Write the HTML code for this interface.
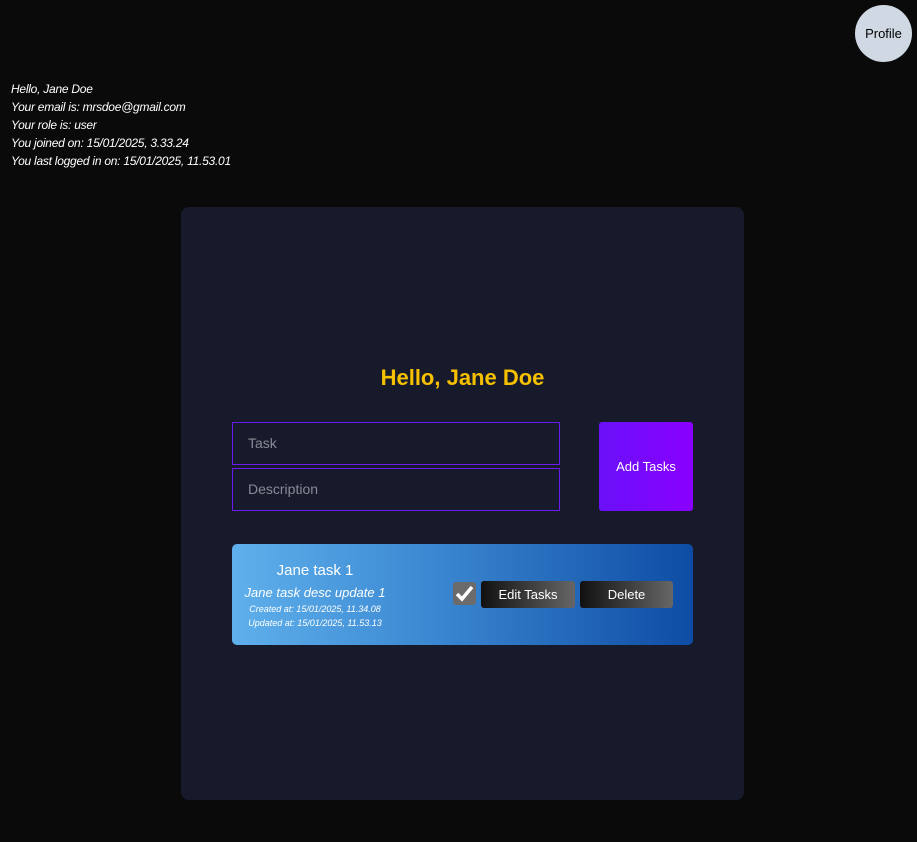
<!DOCTYPE html>
<html><head><style>
body{margin:0;width:917px;height:842px;background:#0a0a0a;font-family:"Liberation Sans",sans-serif;position:relative;overflow:hidden}
.prof{position:absolute;left:855px;top:5px;width:57px;height:57px;border-radius:50%;background:#cfd8e3;color:#000;font-size:13px;display:flex;align-items:center;justify-content:center}
.info{position:absolute;left:11px;top:80px;color:#fff;font-style:italic;font-size:12px;line-height:18px;letter-spacing:-0.25px}
.card{position:absolute;left:181px;top:207px;width:563px;height:593px;background:#171a2a;border-radius:8px}
h1{position:absolute;left:0;width:100%;top:158px;margin:0;text-align:center;color:#f5c000;font-size:22px;font-weight:bold}
.in{position:absolute;left:51px;height:41px;border:1px solid #6a1cf0;background:#171a2a;color:#8a8a96;font-size:14px;line-height:41px;padding-left:15px;width:311px}
.add{position:absolute;left:418px;top:215px;width:94px;height:89px;border-radius:3px;background:linear-gradient(90deg,#6a10f8,#8a00ff);color:#fff;font-size:13px;display:flex;align-items:center;justify-content:center}
.task{position:absolute;left:51px;top:337px;width:461px;height:101px;border-radius:5px;background:linear-gradient(90deg,#5fb0ec,#3a86d0 45%,#0e4ca4)}
.t{position:absolute;color:#fff;text-align:center;width:160px;left:3px}
.chk{position:absolute;left:221px;top:38px;width:23px;height:23px;background:#6b6b6b;border-radius:3px}
.btn{position:absolute;top:37px;height:27px;border-radius:3px;background:linear-gradient(90deg,#111,#666);color:#fff;font-size:13px;display:flex;align-items:center;justify-content:center}
</style></head><body>
<div class="prof">Profile</div>
<div class="info">Hello, Jane Doe<br>Your email is: mrsdoe@gmail.com<br>Your role is: user<br>You joined on: 15/01/2025, 3.33.24<br>You last logged in on: 15/01/2025, 11.53.01</div>
<div class="card">
<h1>Hello, Jane Doe</h1>
<div class="in" style="top:215px">Task</div>
<div class="in" style="top:261px">Description</div>
<div class="add">Add Tasks</div>
<div class="task">
<div class="t" style="top:18px;font-size:15px">Jane task 1</div>
<div class="t" style="top:41px;font-size:13px;font-style:italic">Jane task desc update 1</div>
<div class="t" style="top:60px;font-size:9px;font-style:italic">Created at: 15/01/2025, 11.34.08</div>
<div class="t" style="top:74px;font-size:9px;font-style:italic">Updated at: 15/01/2025, 11.53.13</div>
<div class="chk"><svg width="23" height="23" viewBox="0 0 23 23"><path d="M4 12 L9 17 L19 5" fill="none" stroke="#fff" stroke-width="3.5"/></svg></div>
<div class="btn" style="left:249px;width:94px">Edit Tasks</div>
<div class="btn" style="left:348px;width:93px">Delete</div>
</div>
</div>
</body></html>
